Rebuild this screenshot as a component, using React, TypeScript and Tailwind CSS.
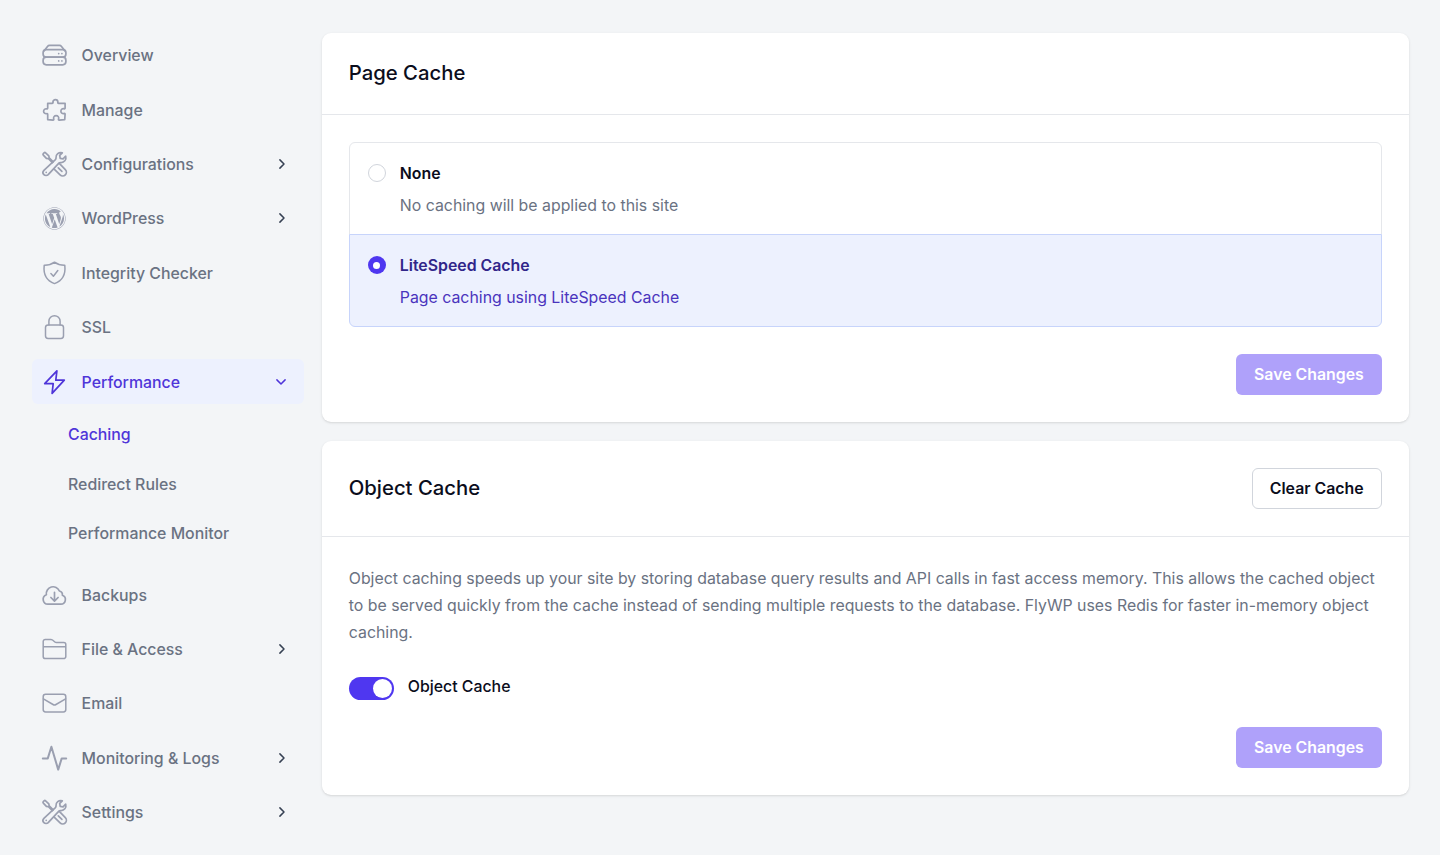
import { useState } from 'react';
import type { ReactNode } from 'react';
import clsx from 'clsx';
import { FaWordpress } from 'react-icons/fa';

function Icon({ children }: { children: ReactNode }) {
  return (
    <svg
      viewBox="-0.5 0 26 26"
      className="size-[26px] shrink-0 overflow-visible"
      fill="none"
      stroke="currentColor"
      strokeWidth="1.7"
      strokeLinecap="round"
      strokeLinejoin="round"
    >
      {children}
    </svg>
  );
}

const ServerIcon = () => (
  <Icon>
    <rect x="1.6" y="7.6" width="22.8" height="7.6" rx="3.2" />
    <rect x="1.6" y="15.2" width="22.8" height="7.6" rx="3.2" />
    <path d="M2.4 9 6 4.4a2.6 2.6 0 0 1 2-1h10a2.6 2.6 0 0 1 2 1L23.6 9M17.2 11.6h.01M20.4 11.6h.01M17.2 18.9h.01M20.4 18.9h.01" />
  </Icon>
);

const PuzzleIcon = () => (
  <Icon>
    <path d="M6.2 6.3h4.6c.8 0 1-.5.6-1.1a2.5 2.5 0 1 1 5 0c-.3.6 0 1.1.7 1.1h6.5v4.8c0 .7-.6.9-1.2.6a2.5 2.5 0 1 0 0 4.9c.6-.3 1.2 0 1.2.7l-.4 5.4-5.5.4c-.7 0-.9-.5-.6-1.1a2.6 2.6 0 1 0-4.9 0c.3.6 0 1.1-.7 1.1l-5.3-.4v-5.3c0-.7-.5-1-1.1-.7a2.5 2.5 0 1 1 0-4.9c.6.3 1.1 0 1.1-.7Z" />
  </Icon>
);

const ToolsIcon = () => (
  <Icon>
    <path d="M20.8 1.8c-3.4-1-6.7 1.6-6.3 5.1.1.8-.1 1.2-.6 1.7L2.4 19.3a3 3 0 1 0 4.3 4.3L17.4 12.1c.5-.5.9-.7 1.7-.6 3.5.4 6.1-2.9 5.1-6.3l-2.6 2.6-2.9-.5-.5-2.9Z" />
    <path d="m10.9 11.6-4-3.9-2-.4-3.1-3.2a1.1 1.1 0 0 1 0-1.5l.8-.8a1.1 1.1 0 0 1 1.5 0l3.2 3.1.4 2 4 4M17.8 12.4l6 6.2a3.6 3.6 0 0 1-5.2 5.2l-6.2-6M16.8 16.8l3.6 3.6M4.7 21.3h.01" />
  </Icon>
);

const ShieldIcon = () => (
  <Icon>
    <path
      strokeWidth="1.5"
      d="M13 2.2c3 2.2 6.4 3.2 10.3 3.1.9 8.1-1.4 15-10.3 18.3C4.1 20.3 1.8 13.4 2.7 5.3 6.6 5.4 10 4.4 13 2.2ZM9.4 13.6l2.5 2.6 4.4-5.7"
    />
  </Icon>
);

const LockIcon = () => (
  <Icon>
    <rect strokeWidth="1.5" x="4" y="11" width="18" height="13.4" rx="2.6" />
    <path strokeWidth="1.5" d="M7.4 11V7.3a5.6 5.6 0 0 1 11.2 0V11" />
  </Icon>
);

const BoltIcon = () => (
  <Icon>
    <path d="M15.4 1.8 3.2 14.7h8.5L10.6 24.3 22.8 11.2h-8.5Z" />
  </Icon>
);

const CloudIcon = () => (
  <Icon>
    <path d="M6.4 22.2a4.9 4.9 0 0 1-1.500-9.5A6.8 6.8 0 0 1 17.9 9a4 4 0 0 1 3 4.3 4.6 4.6 0 0 1-1.5 8.9ZM13 10.3v8.5M9.4 15.5l3.6 3.6 3.6-3.6" />
  </Icon>
);

const FolderIcon = () => (
  <Icon>
    <path
      strokeWidth="1.5"
      d="M1.7 10.9V5.4a2 2 0 0 1 2-2h5.6c.6 0 1.2.2 1.7.6l2.4 2c.4.4 1 .6 1.6.6h7.3a2 2 0 0 1 2 2v11.8a2.2 2.2 0 0 1-2.2 2.2H3.9a2.2 2.2 0 0 1-2.2-2.2ZM1.7 10.7h22.6"
    />
  </Icon>
);

const MailIcon = () => (
  <Icon>
    <rect strokeWidth="1.5" x="1.7" y="4.3" width="22.6" height="17.7" rx="2.4" />
    <path strokeWidth="1.5" d="m1.9 8.8 9.6 5.7a3 3 0 0 0 3 0l9.6-5.7" />
  </Icon>
);

const PulseIcon = () => (
  <Icon>
    <path strokeWidth="2" d="M1.3 13.4h5L9.9 1.7 16.7 24.6l3.5-11.2h4.5" />
  </Icon>
);

const WordPressIcon = () => (
  <span className="flex size-[26px] shrink-0 items-center justify-center">
    <FaWordpress className="size-[23px]" />
  </span>
);

function Chevron({ open }: { open?: boolean }) {
  return (
    <svg
      viewBox="0 0 12 12"
      className={clsx('size-3 shrink-0', open && 'mr-px rotate-90')}
      fill="none"
      stroke="currentColor"
      strokeWidth="1.5"
      strokeLinecap="round"
      strokeLinejoin="round"
    >
      <path d="m3.9 1.9 4.1 4.1-4.1 4.1" />
    </svg>
  );
}

interface NavEntry {
  label: string;
  icon: () => ReactNode;
  expandable?: boolean;
  children?: string[];
}

const navigation: NavEntry[] = [
  { label: 'Overview', icon: ServerIcon },
  { label: 'Manage', icon: PuzzleIcon },
  { label: 'Configurations', icon: ToolsIcon, expandable: true },
  { label: 'WordPress', icon: WordPressIcon, expandable: true },
  { label: 'Integrity Checker', icon: ShieldIcon },
  { label: 'SSL', icon: LockIcon },
  {
    label: 'Performance',
    icon: BoltIcon,
    expandable: true,
    children: ['Caching', 'Redirect Rules', 'Performance Monitor'],
  },
  { label: 'Backups', icon: CloudIcon },
  { label: 'File & Access', icon: FolderIcon, expandable: true },
  { label: 'Email', icon: MailIcon },
  { label: 'Monitoring & Logs', icon: PulseIcon, expandable: true },
  { label: 'Settings', icon: ToolsIcon, expandable: true },
];

function Sidebar() {
  return (
    <nav className="flex w-[272px] shrink-0 flex-col gap-[9.07px] font-medium text-gray-500">
      {navigation.map(({ label, icon: ItemIcon, expandable, children }) => {
        const active = label === 'Performance';
        return (
          <div key={label}>
            <a
              href="#"
              className={clsx(
                'flex h-[45.33px] items-center rounded-md pr-[16.5px] pl-[9.3px]',
                active && 'bg-[#edf1fe] text-[#4f35d9]'
              )}
            >
              <span className={active ? 'text-[#4f35d9]' : 'text-[#9a9fb0]'}>
                <ItemIcon />
              </span>
              <span className="ml-[14.3px] flex-1 pt-[1.9px]">{label}</span>
              {expandable && (
                <span className={active ? 'text-[#4f35d9]' : 'text-gray-700'}>
                  <Chevron open={active} />
                </span>
              )}
            </a>
            {children && (
              <div className="mt-[4.5px] mb-[4.5px]">
                {children.map((child) => (
                  <a
                    key={child}
                    href="#"
                    className={clsx(
                      'flex h-[49.87px] items-center pt-[1.8px] pl-9',
                      child === 'Caching' && 'text-[#4f35d9]'
                    )}
                  >
                    {child}
                  </a>
                ))}
              </div>
            )}
          </div>
        );
      })}
    </nav>
  );
}

const cacheOptions = [
  { id: 'none', title: 'None', description: 'No caching will be applied to this site' },
  { id: 'litespeed', title: 'LiteSpeed Cache', description: 'Page caching using LiteSpeed Cache' },
];

function SaveButton() {
  return (
    <button className="h-[40.8px] w-[146px] rounded-md bg-[#afa1fa] pt-px font-semibold text-white">
      Save Changes
    </button>
  );
}

export default function App() {
  const [pageCache, setPageCache] = useState('litespeed');
  const [objectCache, setObjectCache] = useState(true);

  return (
    <div className="flex h-[855px] w-[1440px] gap-[17.6px] overflow-hidden bg-[#f3f5f7] pt-[32.6px] pl-8 font-[Inter,sans-serif] text-[15.86px]">
      <Sidebar />
      <main className="flex w-[1087.5px] shrink-0 flex-col gap-[18.4px]">
        <section className="h-[389.7px] rounded-[9px] bg-white shadow-sm">
          <header className="flex h-[82.5px] items-center border-b border-gray-200 px-[27.2px]">
            <h2 className="text-[20.3px] font-medium text-[#0b0d1c]">Page Cache</h2>
          </header>
          <div className="px-[27.2px] pt-[27.4px]">
            <div>
              {cacheOptions.map((option, index) => {
                const selected = option.id === pageCache;
                return (
                  <button
                    key={option.id}
                    onClick={() => setPageCache(option.id)}
                    className={clsx(
                      'flex w-full items-start border px-[18px] pt-[17px] text-left',
                      index === 0 ? 'h-[93px] rounded-t-md' : '-mt-px h-[93px] rounded-b-md',
                      selected ? 'relative border-[#c7d4fb] bg-[#edf1fe]' : 'border-gray-200 bg-white'
                    )}
                  >
                    <span
                      className={clsx(
                        'mt-[4px] flex size-[18px] shrink-0 items-center justify-center rounded-full',
                        selected ? 'bg-[#4f37f0]' : 'border border-gray-300 bg-white'
                      )}
                    >
                      {selected && <span className="size-[7px] rounded-full bg-white" />}
                    </span>
                    <span className="ml-[14px] flex flex-col gap-[9px] leading-[23px]">
                      <span
                        className={clsx('mt-[1.6px] font-semibold', selected ? 'text-[#31268a]' : 'text-[#0b0d1c]')}
                      >
                        {option.title}
                      </span>
                      <span className={selected ? 'text-[#4a34bd]' : 'text-gray-500'}>{option.description}</span>
                    </span>
                  </button>
                );
              })}
            </div>
            <div className="mt-[26.9px] flex justify-end">
              <SaveButton />
            </div>
          </div>
        </section>

        <section className="h-[354.3px] rounded-[9px] bg-white shadow-sm">
          <header className="flex h-[96px] items-center justify-between border-b border-gray-200 px-[27.2px]">
            <h2 className="text-[20.3px] font-medium text-[#0b0d1c]">Object Cache</h2>
            <button className="h-[40.8px] w-[130.4px] rounded-md border border-gray-300 bg-white pt-px font-semibold text-[#0b0d1c]">
              Clear Cache
            </button>
          </header>
          <div className="px-[27.2px] pt-[28.1px]">
            <p className="leading-[27.2px] text-gray-500">
              Object caching speeds up your site by storing database query results and API calls in fast access
              memory. This allows the cached object to be served quickly from the cache instead of sending multiple
              requests to the database. FlyWP uses Redis for faster in-memory object caching.
            </p>
            <div className="mt-[30.5px] flex h-[23px] items-center gap-[14px]">
              <button
                role="switch"
                aria-checked={objectCache}
                onClick={() => setObjectCache(!objectCache)}
                className={clsx(
                  'flex h-[23px] w-[45px] items-center rounded-full px-[2px]',
                  objectCache ? 'justify-end bg-[#4f37f0]' : 'justify-start bg-gray-200'
                )}
              >
                <span className="size-[18.5px] rounded-full bg-white" />
              </button>
              <span className="-mt-[3px] font-medium text-[#0b0d1c]">Object Cache</span>
            </div>
            <div className="mt-[27.2px] flex justify-end">
              <SaveButton />
            </div>
          </div>
        </section>
      </main>
    </div>
  );
}
